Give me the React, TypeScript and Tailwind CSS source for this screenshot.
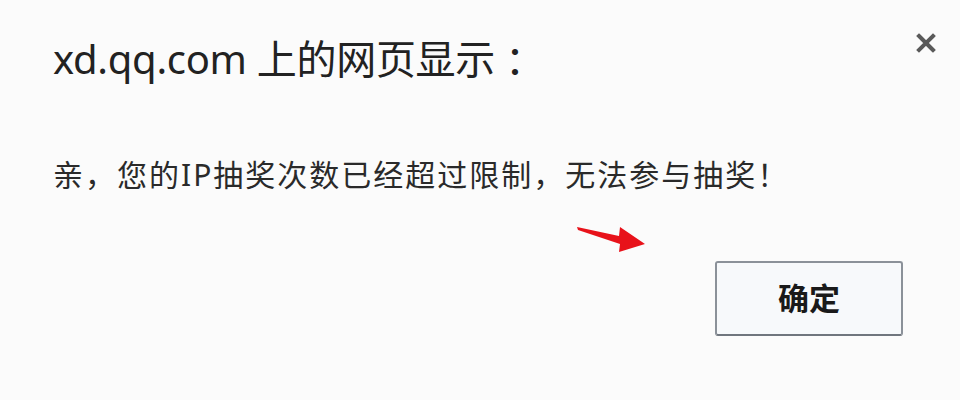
import React from "react";

const font = { fontFamily: '"Noto Sans", "Noto Sans CJK SC", sans-serif' };

function CloseIcon() {
  return (
    <svg width="20" height="20" viewBox="0 0 20 20" className="text-[#5a5a5a]">
      <path d="M3 3 L17 17 M17 3 L3 17" stroke="currentColor" strokeWidth="4" strokeLinecap="square" />
    </svg>
  );
}

function RedArrow() {
  return (
    <svg width="80" height="34" viewBox="0 0 80 34">
      <polygon points="2,8 44,17 45,8 70,25 44,33 45,25 3,11" fill="#e8121a" />
    </svg>
  );
}

export default function App() {
  return (
    <div className="relative h-[400px] w-[960px] overflow-hidden bg-[#fbfbfb] text-[#1a1a1a]" style={font}>
      <button className="absolute right-[24px] top-[33px]">
        <CloseIcon />
      </button>
      <div className="flex h-full flex-col pl-[53px] pr-[57px]">
        <h1 className="mt-[31px] text-[40px] leading-[56px] tracking-[-0.3px] text-[#222]">
          xd.qq.com 上的网页显示<span className="ml-[10px]">：</span>
        </h1>
        <p className="mt-[68px] text-[30px] leading-[40px] tracking-[2px] text-[#2a2a2a]">
          亲，您的IP抽奖次数已经超过限制，无法参与抽奖！
        </p>
        <div className="ml-[522px] mt-[24px] h-[34px]">
          <RedArrow />
        </div>
        <div className="mt-[8px] flex justify-end">
          <button className="flex h-[75px] w-[188px] items-center justify-center rounded-[3px] border-2 border-[#8b9199] border-b-[#70767e] bg-[#f7f9fb] text-[31px] font-bold text-[#1a1a1a]">
            确定
          </button>
        </div>
      </div>
    </div>
  );
}
